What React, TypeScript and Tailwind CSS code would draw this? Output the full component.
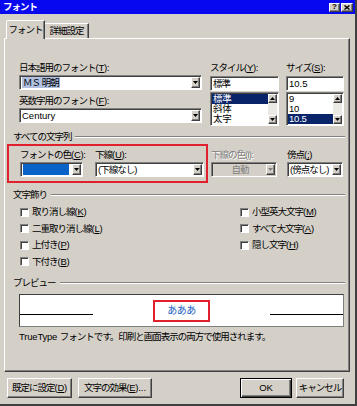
import type { ReactNode } from "react";

const raised =
  "border border-t-white border-l-white border-r-[#404040] border-b-[#404040] shadow-[inset_-1px_-1px_0_#808080]";
const sunken =
  "border border-t-[#808080] border-l-[#808080] border-r-white border-b-white shadow-[inset_1px_1px_0_#404040]";

function Tri({ up, disabled }: { up?: boolean; disabled?: boolean }) {
  return (
    <svg width="5" height="3" viewBox="0 0 5 3">
      <path d={up ? "M0 3H5L2.5 0Z" : "M0 0H5L2.5 3Z"} fill={disabled ? "#808080" : "#000"} />
    </svg>
  );
}

function Label({ children, className = "", disabled }: { children: ReactNode; className?: string; disabled?: boolean }) {
  return (
    <div
      className={`h-[12px] whitespace-nowrap leading-[12px] ${
        disabled ? "text-[#808080] [text-shadow:1px_1px_0_#fff]" : ""
      } ${className}`}
    >
      {children}
    </div>
  );
}

// access key, e.g. (T)
function Key({ k }: { k: string }) {
  return (
    <span className="tracking-[-0.3px]">
      (<span className="underline">{k}</span>)
    </span>
  );
}

function Combo({ children, disabled, center }: { children?: ReactNode; disabled?: boolean; center?: boolean }) {
  return (
    <div className={`mt-[1px] flex h-[15px] items-stretch p-px ${sunken} ${disabled ? "bg-[#d4d0c8]" : "bg-white"}`}>
      <div
        className={`flex flex-1 items-center overflow-hidden whitespace-nowrap pl-px leading-[11px] ${
          center ? "justify-center" : ""
        } ${disabled ? "text-[#808080]" : ""}`}
      >
        {children}
      </div>
      <div className={`flex w-[9px] items-center justify-center bg-[#d4d0c8] ${raised}`}>
        <Tri disabled={disabled} />
      </div>
    </div>
  );
}

function Field({ children }: { children: ReactNode }) {
  return (
    <div className={`mt-[2px] flex h-[15px] items-center bg-white p-px pl-[2px] leading-[11px] ${sunken}`}>{children}</div>
  );
}

function List({ items, sel }: { items: string[]; sel: number }) {
  return (
    <div className={`mt-[1px] flex h-[34px] bg-white p-px ${sunken}`}>
      <div className="flex-1">
        {items.map((t, i) => (
          <div
            key={t}
            className={
              i === sel
                ? "h-[10px] bg-[#0a246a] pl-px leading-[10px] tracking-[-0.2px] text-white"
                : "h-[10px] pl-px leading-[10px] tracking-[-0.2px]"
            }
          >
            {t}
          </div>
        ))}
      </div>
      <div className="flex w-[9px] flex-col">
        <div className={`flex h-[9px] items-center justify-center bg-[#d4d0c8] ${raised}`}>
          <Tri up />
        </div>
        <div className="flex-1 bg-[#ebe9e4]" />
        <div className={`flex h-[9px] items-center justify-center bg-[#d4d0c8] ${raised}`}>
          <Tri />
        </div>
      </div>
    </div>
  );
}

function Group({ title, className = "" }: { title: string; className?: string }) {
  return (
    <div className={`flex h-[12px] w-[332px] items-center gap-[4px] ${className}`}>
      <span className="whitespace-nowrap leading-[12px]">{title}</span>
      <span className="h-[2px] flex-1 border-t border-b border-t-[#808080] border-b-white" />
    </div>
  );
}

function Check({ children }: { children: ReactNode }) {
  return (
    <div className="flex h-[16.5px] items-center gap-[3px]">
      <span className={`h-[9px] w-[9px] bg-white ${sunken}`} />
      <span className="whitespace-nowrap leading-[12px]">{children}</span>
    </div>
  );
}

export default function App() {
  return (
    <div className="flex h-[406px] w-[357px] flex-col overflow-hidden border-r-2 border-b-2 border-r-[#404040] border-b-[#404040] bg-[#d4d0c8] font-['Liberation_Sans','Noto_Sans_CJK_JP',sans-serif] text-[9.5px] tracking-[-1px] text-black">
      <div className="flex h-[14px] shrink-0 items-center justify-between bg-[#0808f0] pl-[3px] pr-[2px]">
        <span className="text-[9.5px] font-bold leading-none text-white">フォント</span>
        <div className="flex items-center gap-px">
          <div className={`flex h-[9px] w-[11px] items-center justify-center bg-[#d4d0c8] text-[8px] font-bold leading-none tracking-normal ${raised}`}>
            ?
          </div>
          <div className={`flex h-[9px] w-[12px] items-center justify-center bg-[#d4d0c8] ${raised}`}>
            <svg width="6" height="5" viewBox="0 0 6 5">
              <path d="M0.5 0.5L5.5 4.5M5.5 0.5L0.5 4.5" stroke="#000" strokeWidth="1.4" />
            </svg>
          </div>
        </div>
      </div>

      <div className="mt-[6px] flex items-end pl-[6px]">
        <div className="relative z-10 -mb-px flex h-[19px] w-[39px] justify-center rounded-tl-[2px] border-t border-l border-r border-t-white border-l-white border-r-[#404040] bg-[#d4d0c8] pt-[3px] leading-[12px] shadow-[inset_-1px_0_0_#808080]">
          フォント
        </div>
        <div className="flex h-[15px] w-[44px] items-center justify-center border-t border-r border-t-white border-r-[#404040] shadow-[inset_-1px_0_0_#808080]">
          詳細設定
        </div>
      </div>

      <div className={`ml-[4px] flex h-[334px] w-[346px] shrink-0 flex-col pl-[8px] pt-[23px] ${raised}`}>
        <div className="flex">
          <div className="ml-[6px] w-[183px]">
            <Label>
              日本語用のフォント<Key k="T" />:
            </Label>
            <div className="mt-[1px]">
              <Combo>
                <span className="bg-[#b0c0e0] px-px">ＭＳ 明朝</span>
              </Combo>
            </div>
            <Label className="mt-[5px]">
              英数字用のフォント<Key k="F" />:
            </Label>
            <div className="mt-[1px]">
              <Combo>
                <span className="tracking-normal">Century</span>
              </Combo>
            </div>
          </div>
          <div className="ml-[8px] w-[69px]">
            <Label>
              スタイル<Key k="Y" />:
            </Label>
            <Field>標準</Field>
            <List items={["標準", "斜体", "太字"]} sel={0} />
          </div>
          <div className="ml-[7px] w-[58px]">
            <Label>
              サイズ<Key k="S" />:
            </Label>
            <Field>
              <span className="tracking-normal">10.5</span>
            </Field>
            <List items={["9", "10", "10.5"]} sel={2} />
          </div>
        </div>

        <Group title="すべての文字列" className="mt-[5px]" />

        <div className="relative mt-[6px] flex">
          <div className="pointer-events-none absolute -top-[5px] -left-[6px] h-[39px] w-[201px] border-2 border-[#e0202c]" />
          <div className="ml-[7px] w-[63px]">
            <Label>
              フォントの色<Key k="C" />:
            </Label>
            <Combo>
              <span className="mr-[3px] h-full flex-1 bg-[#0a64c8]" />
            </Combo>
          </div>
          <div className="ml-[12px] w-[109px]">
            <Label>
              下線<Key k="U" />:
            </Label>
            <Combo>(下線なし)</Combo>
          </div>
          <div className="ml-[7px] w-[66px]">
            <Label disabled>下線の色(I):</Label>
            <Combo disabled center>
              自動
            </Combo>
          </div>
          <div className="ml-[10px] w-[56px]">
            <Label>
              傍点<Key k=";" />
            </Label>
            <Combo>(傍点なし)</Combo>
          </div>
        </div>

        <Group title="文字飾り" className="mt-[12px]" />

        <div className="mt-[3px] flex">
          <div className="ml-[7px] w-[220px]">
            <Check>
              取り消し線<Key k="K" />
            </Check>
            <Check>
              二重取り消し線<Key k="L" />
            </Check>
            <Check>
              上付き<Key k="P" />
            </Check>
            <Check>
              下付き<Key k="B" />
            </Check>
          </div>
          <div>
            <Check>
              小型英大文字<Key k="M" />
            </Check>
            <Check>
              すべて大文字<Key k="A" />
            </Check>
            <Check>
              隠し文字<Key k="H" />
            </Check>
          </div>
        </div>

        <Group title="プレビュー" className="mt-[7px]" />

        <div className="mt-[5px] ml-[6px] flex h-[33px] w-[325px] items-center border border-t-[#404040] border-l-[#404040] border-r-[#808080] border-b-[#808080] bg-white">
          <span className="mt-[7px] h-px w-[73px] bg-black" />
          <div className="flex flex-1 justify-center">
            <div className="flex h-[22px] w-[57px] items-center justify-center border-2 border-[#e0202c] text-[10px] tracking-[-0.5px] text-[#1b5fc2]">
              あああ
            </div>
          </div>
          <span className="mt-[7px] h-px w-[73px] bg-black" />
        </div>

        <div className="mt-[4px] ml-[6px] h-[12px] whitespace-nowrap leading-[12px]">
          <span className="tracking-[-0.2px]">TrueType </span>フォントです。印刷と画面表示の両方で使用されます。
        </div>
      </div>

      <div className="mt-[6px] flex">
        <div className={`ml-[7px] flex h-[20px] w-[65px] items-center justify-center whitespace-nowrap ${raised}`}>
          既定に設定<Key k="D" />
        </div>
        <div className={`ml-[6px] flex h-[20px] w-[74px] items-center justify-center whitespace-nowrap ${raised}`}>
          文字の効果<Key k="E" />
          <span className="tracking-normal">...</span>
        </div>
        <div className="ml-[88px] flex h-[20px] w-[52px] items-center justify-center border border-black tracking-normal shadow-[inset_1px_1px_0_#fff,inset_-1px_-1px_0_#404040,inset_-2px_-2px_0_#808080]">
          OK
        </div>
        <div className={`ml-[4px] flex h-[20px] w-[48px] items-center justify-center whitespace-nowrap ${raised}`}>
          キャンセル
        </div>
      </div>
    </div>
  );
}
